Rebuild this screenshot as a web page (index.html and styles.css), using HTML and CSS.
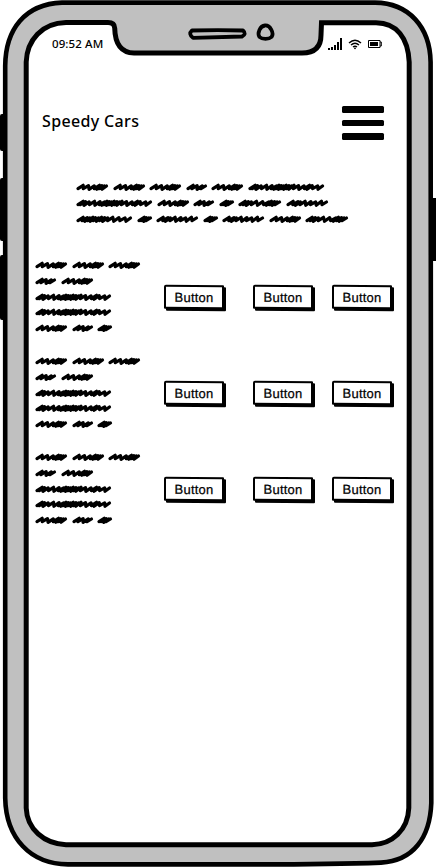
FILE: index.html
```
<!DOCTYPE html>
<html lang="en">
<head>
<meta charset="utf-8">
<title>Speedy Cars</title>
<link rel="stylesheet" href="styles.css">
</head>
<body>
<div class="phone">
  <svg class="frame" viewBox="0 0 436 867" aria-hidden="true">
    <g class="keys">
      <rect x="0" y="114" width="6" height="37" rx="2"/>
      <rect x="0" y="178" width="6" height="63" rx="2"/>
      <rect x="0" y="255" width="6" height="65" rx="2"/>
      <rect x="429" y="198" width="9" height="63" rx="2"/>
    </g>
    <path class="case" d="M5.2 66C5.5 29 25 4 62 2.6H375C409 3 430 27 430.6 62L431.3 803C430 838 413 861 381 862.6Q330 864.5 250 864.4H68C30 864 6 838 5.2 798Z"/>
    <path class="glass" d="M26.2 62C27 40 42 23 66 22.5H108Q114.500 22.500 114.700 28C115 43 120 52.700 134 53H302Q321 53 321 35L321.500 22.800H376C397 23 408 38 409.200 62V400L408.800 808C408 830 392 844.400 372 844.700H66C44 844 27 829 26.200 808Z"/>
    <path class="part" d="M192 30.500Q218 29.800 243 30.500Q247 34 242 36.500Q218 37.200 193 37.800Q188 34 192 30.500Z"/>
    <path class="part" d="M265 25.500C260 26 257 33 259.500 37C262 39.500 269 39.500 271.500 37C274.500 33 270 25 265 25.500Z"/>
  </svg>
  <div class="screen">
    <div class="status">
      <span class="clock">09:52 AM</span>
      <span class="indicators">
        <svg class="signal" viewBox="0 0 14 12"><path d="M0 10h2v2H0zM3 9h2v3H3zM6 7h2v5H6zM9 4h2v8H9zM12 0h2v12h-2z"/></svg>
        <svg class="wifi" viewBox="0 0 14 11"><path d="M1 4Q7-1.600 13 4M3 6Q7 2.300 11 6M5 8Q7 6.300 9 8"/><circle cx="7" cy="9.300" r=".9"/></svg>
        <svg class="battery" viewBox="0 0 14 8"><path class="shell" d="M.5.5h11.500v7H.5zM12 2h1.300v4H12"/><path d="M2 2h8v4H2z"/></svg>
      </span>
    </div>
    <header class="header">
      <h1 class="brand">Speedy Cars</h1>
      <div class="menu"><i></i><i></i><i></i></div>
    </header>
    <div class="scribble intro"></div>
    <main class="list">
      <section class="row"><div class="scribble"></div><button class="btn">Button</button><button class="btn">Button</button><button class="btn">Button</button></section>
      <section class="row"><div class="scribble"></div><button class="btn">Button</button><button class="btn">Button</button><button class="btn">Button</button></section>
      <section class="row"><div class="scribble"></div><button class="btn">Button</button><button class="btn">Button</button><button class="btn">Button</button></section>
    </main>
  </div>
</div>
<script src="app.js"></script>
</body>
</html>
```
FILE: styles.css
```
body { margin: 0; background: #fff; }
.phone { position: relative; width: 436px; height: 867px; overflow: hidden; font-family: "Noto Sans", sans-serif; color: #000; }
.frame { position: absolute; left: 0; top: 0; width: 436px; height: 867px; }
.keys { fill: #000; }
.case { fill: #c0c0c0; stroke: #000; stroke-width: 4.6; }
.glass { fill: #fff; stroke: #000; stroke-width: 5; }
.part { fill: #c0c0c0; stroke: #000; stroke-width: 3.8; stroke-linejoin: round; }
.screen { position: relative; box-sizing: border-box; padding: 36px 0 0 35px; }
.status { display: flex; justify-content: space-between; align-items: center; height: 16px; margin: 0 54.5px 0 17px; }
.clock { font: 500 11.5px/16px "Noto Sans", sans-serif; white-space: nowrap; letter-spacing: .1px; }
.indicators { display: flex; align-items: center; height: 16px; }
.signal { width: 14px; height: 12px; }
.wifi { width: 14px; height: 11px; margin-left: 6px; fill: #000; }
.wifi path { fill: none; stroke: #000; stroke-width: 1.4; }
.battery { width: 14px; height: 8px; margin-left: 6px; }
.battery .shell { fill: none; stroke: #000; }
.header { display: flex; justify-content: space-between; margin: 54px 52px 0 7px; height: 34px; }
.brand { margin: 0; font: 500 16px/31px "Noto Sans", sans-serif; white-space: nowrap; letter-spacing: .35px; }
.menu { display: flex; flex-direction: column; gap: 6.8px; width: 42px; }
.menu i { height: 6.8px; border-radius: 1.5px; background: #000; }
.intro { margin: 42px 0 0 41px; }
.line { display: flex; gap: 5.5px; height: 15.8px; }
.line svg { height: 10px; flex: none; overflow: visible; }
.line path { fill: none; stroke: #000; stroke-width: 3.2; stroke-linecap: round; stroke-linejoin: round; }
.list { margin-top: 30.6px; }
.row { display: grid; grid-template-columns: 129px 89px 79px 62px; height: 96px; align-items: start; }
.btn { box-sizing: border-box; width: 60px; height: 24px; margin: 25.5px 0 0; padding: 0; border: 2px solid #000; border-width: 2px 2px 2.5px; border-radius: 2px 1px 1px; background: #fff; box-shadow: 2px 2px 0 #000; color: #000; font: 13px/19px "Liberation Sans", sans-serif; letter-spacing: .2px; -webkit-text-stroke: .25px #000; transform: skewY(.5deg); }
```
FILE: app.js
```
const intro = [[31, 31, 31, 20, 31, 75], [75, 31, 20, 14, 42, 41], [55, 14, 41, 14, 41, 31, 42]];
const item = [[31, 31, 31], [20, 31], [75], [75], [31, 20, 14]];

// Horizontal step of each pen stroke, wide for loose and narrow for dense scribbles.
const steps = {
  14: [2.5, 3.5, 3],
  20: [5, 6.5, 5],
  31: [5.5, 6, 5.5, 2.5, 2.5, 3],
  41: [5, 2.5, 5, 6, 5, 6, 6],
  42: [3, 3, 5, 6, 6, 2.5, 3, 2.5, 3],
  55: [4, 2.5, 3, 2.5, 3, 3, 3, 3, 5, 6, 6, 6],
  75: [2.5, 4, 6, 6, 5, 2.5, 2.5, 2.5, 3, 3, 3, 2.5, 5, 6, 6, 3, 6, 6]
};

function word(width) {
  const list = steps[width];
  const scale = (width - 7) / list.reduce((a, b) => a + b, 0);
  let x = 2;
  let d = "M2 6.6";
  list.forEach((step, i) => {
    const top = 3.3 + (i % 3) * 0.3;
    d += `L${x + 5.2} ${top}`;
    x += step * scale;
    d += `L${x} ${6.7 + (i % 2) * 0.6}`;
  });
  d += `L${width - 0.5} 4`;
  return `<svg width="${width}" height="10"><path d="${d}"/></svg>`;
}

document.querySelectorAll(".scribble").forEach(el => {
  const lines = el.classList.contains("intro") ? intro : item;
  el.innerHTML = lines.map(l => `<div class="line">${l.map(word).join("")}</div>`).join("");
});
```
